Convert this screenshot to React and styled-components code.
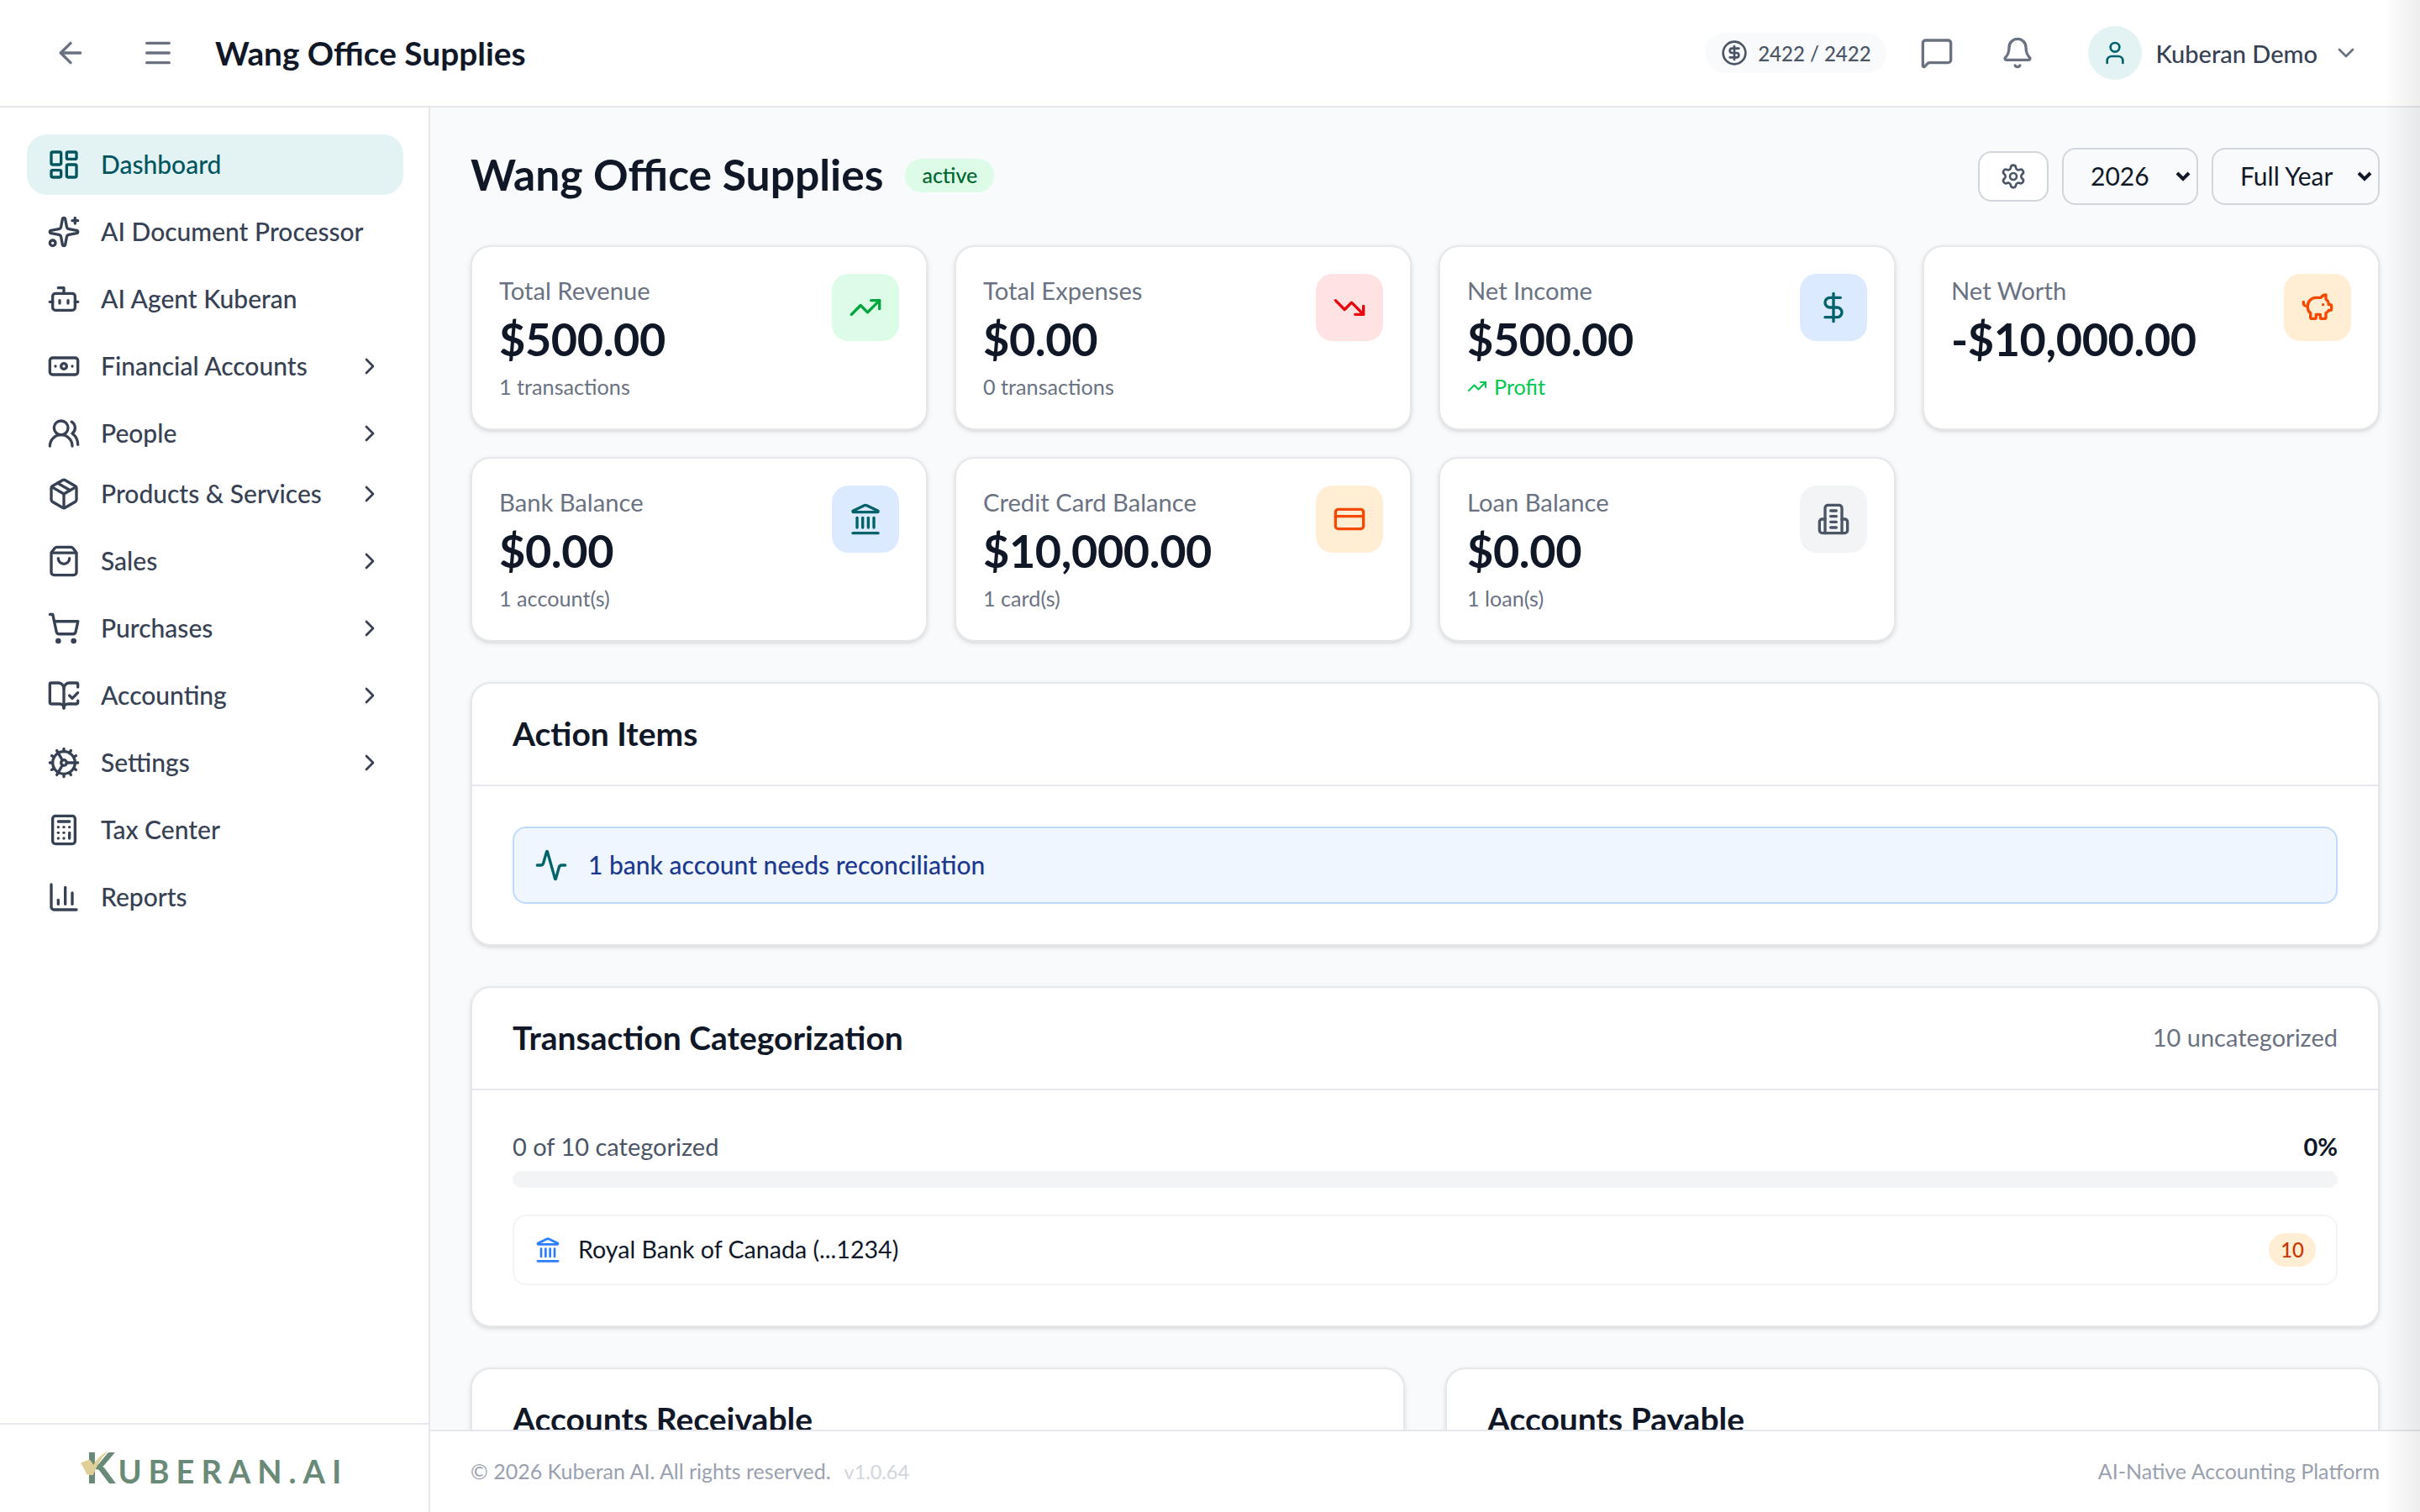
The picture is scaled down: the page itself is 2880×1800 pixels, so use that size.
import React from 'react'
import styled, { createGlobalStyle } from 'styled-components'
import {
  Activity, ArrowLeft, Banknote, Bell, BookOpenCheck, Bot, Calculator, ChartColumn,
  ChevronDown, ChevronRight, CircleDollarSign, Cog, CreditCard, DollarSign, Landmark, LayoutDashboard,
  Menu, MessageSquare, Package, PiggyBank, Settings, ShoppingBag, ShoppingCart, Sparkles, TrendingDown,
  TrendingUp, User, UsersRound,
} from 'lucide-react'

const GlobalStyle = createGlobalStyle`
  html, body { margin: 0; padding: 0; height: 100%; }
  body { font-family: Lato, "DejaVu Sans", sans-serif; color: #101828; background: #f9fafb; }
  #root { height: 100%; }
  * { box-sizing: border-box; }
`

const Page = styled.div`
  position: relative;
  height: 1800px;
  display: flex;
  flex-direction: column;
  overflow: hidden;
`

const EdgeFade = styled.div`
  position: absolute;
  top: 0;
  right: 0;
  bottom: 0;
  width: 44px;
  background: linear-gradient(to right, rgba(0, 0, 0, 0), rgba(0, 0, 0, 0.07));
  pointer-events: none;
`

const TopBar = styled.header`
  height: 128px;
  flex: none;
  display: flex;
  align-items: center;
  justify-content: space-between;
  padding: 0 48px;
  background: #fff;
  border-bottom: 2px solid #e5e7eb;
`

const BarGroup = styled.div`
  display: flex;
  align-items: center;
  gap: ${p => p.$gap || 24}px;
`

const IconButton = styled.div`
  width: 72px;
  height: 72px;
  display: flex;
  align-items: center;
  justify-content: center;
  color: #6a7282;
`

const CompanyName = styled.div`
  font-size: 38.8px;
  font-weight: 700;
  color: #101828;
`

const CreditPill = styled.div`
  width: 216px;
  height: 48px;
  display: flex;
  align-items: center;
  justify-content: center;
  gap: 12px;
  border-radius: 24px;
  background: #f9fafb;
  color: #4a5565;
  font-size: 24px;
  font-weight: 500;
`

const UserButton = styled.div`
  display: flex;
  align-items: center;
  gap: 16px;
  padding: 0 24px;
  color: #6a7282;
`

const Avatar = styled.div`
  width: 64px;
  height: 64px;
  border-radius: 50%;
  background: #e3f2f3;
  color: #00626b;
  display: flex;
  align-items: center;
  justify-content: center;
`

const UserName = styled.span`
  font-size: 29px;
  font-weight: 500;
  color: #364153;
  margin-right: 2px;
`

const Body = styled.div`
  flex: 1;
  min-height: 0;
  display: flex;
`

const Sidebar = styled.aside`
  width: 512px;
  flex: none;
  display: flex;
  flex-direction: column;
  background: #fff;
  border-right: 2px solid #e5e7eb;
`

const Nav = styled.nav`
  flex: 1;
  padding: 32px 30px 0 32px;
`

const NavItem = styled.div`
  height: 72px;
  margin-bottom: ${p => (p.$tight ? 0 : 8)}px;
  display: flex;
  align-items: center;
  gap: 24px;
  padding: 0 24px;
  border-radius: 24px;
  background: ${p => (p.$active ? '#e3f2f3' : 'transparent')};
  color: ${p => (p.$active ? '#00555e' : '#364153')};
  font-size: 30px;
  font-weight: 500;
`

const NavLabel = styled.span`
  flex: 1;
  padding-bottom: 3px;
`

const SideFoot = styled.div`
  height: 106px;
  flex: none;
  display: flex;
  align-items: center;
  justify-content: center;
  border-top: 2px solid #e5e7eb;
`

const Logo = styled.div`
  position: relative;
  display: flex;
  align-items: baseline;
  padding: 0 0 5px 6px;
  color: #6a8a78;
  font-size: 38px;
  font-weight: 700;
  letter-spacing: 8px;
  line-height: 1;
`

const LogoK = styled.span`
  font-size: 52px;
  letter-spacing: 3px;
`

const LogoCheck = styled.svg`
  position: absolute;
  left: 0;
  top: 6px;
`

const MainColumn = styled.div`
  flex: 1;
  min-width: 0;
  display: flex;
  flex-direction: column;
`

const Content = styled.main`
  flex: 1;
  min-height: 0;
  overflow: hidden;
  padding: 48px 48px 0;
  background: #f9fafb;
`

const TitleRow = styled.div`
  height: 68px;
  display: flex;
  align-items: center;
  justify-content: space-between;
  margin-bottom: 48px;
`

const TitleGroup = styled.div`
  display: flex;
  align-items: center;
  gap: 26px;
`

const PageTitle = styled.h1`
  margin: 0 0 6px;
  font-size: 51.6px;
  font-weight: 700;
  color: #101828;
`

const StatusBadge = styled.span`
  height: 40px;
  padding: 0 20px 2px;
  margin-bottom: 2px;
  display: flex;
  align-items: center;
  border-radius: 20px;
  background: #dcfce7;
  color: #016630;
  font-size: 25px;
  font-weight: 500;
`

const Filters = styled.div`
  display: flex;
  align-items: center;
  gap: 16px;
`

const GearButton = styled.div`
  width: 84px;
  height: 60px;
  display: flex;
  align-items: center;
  justify-content: center;
  border: 2px solid #d1d5dc;
  border-radius: 16px;
  background: #fff;
  color: #4a5565;
`

const SelectWrap = styled.div`
  position: relative;
  display: flex;
`

const PeriodSelect = styled.select`
  appearance: none;
  width: ${p => p.$width}px;
  height: 68px;
  padding: 0 0 3px 32px;
  border: 2px solid #d1d5dc;
  border-radius: 16px;
  background: transparent;
  color: #101828;
  font-family: inherit;
  font-size: 30px;
`

const SelectArrow = styled.svg`
  position: absolute;
  right: 9px;
  top: 28px;
  pointer-events: none;
`

const StatGrid = styled.div`
  display: grid;
  grid-template-columns: repeat(4, 1fr);
  gap: 32px;
  margin-bottom: 48px;
`

const StatCard = styled.div`
  height: 220px;
  display: flex;
  justify-content: space-between;
  align-items: flex-start;
  padding: 32px;
  background: #fff;
  border: 2px solid #e5e7eb;
  border-radius: 24px;
  box-shadow: 0 2px 6px rgba(0, 0, 0, 0.1), 0 2px 4px -2px rgba(0, 0, 0, 0.1);
`

const StatLabel = styled.div`
  font-size: 29.2px;
  line-height: 40px;
  color: #6a7282;
`

const StatValue = styled.div`
  margin-top: 6px;
  font-size: 54px;
  line-height: 64px;
  font-weight: 700;
  letter-spacing: -0.4px;
  color: #101828;
`

const StatNote = styled.div`
  margin-top: 8px;
  display: flex;
  align-items: center;
  gap: 8px;
  font-size: 25.2px;
  line-height: 32px;
  color: ${p => p.$color || '#6a7282'};
`

const IconTile = styled.div`
  width: 80px;
  height: 80px;
  flex: none;
  display: flex;
  align-items: center;
  justify-content: center;
  border-radius: 20px;
  background: ${p => p.$bg};
  color: ${p => p.$color};
`

const Panel = styled.section`
  margin-bottom: 48px;
  background: #fff;
  border: 2px solid #e5e7eb;
  border-radius: 24px;
  box-shadow: 0 2px 6px rgba(0, 0, 0, 0.1), 0 2px 4px -2px rgba(0, 0, 0, 0.1);
`

const PanelHead = styled.div`
  height: 122px;
  display: flex;
  align-items: center;
  justify-content: space-between;
  padding: 0 48px;
  border-bottom: 2px solid #e5e7eb;
`

const PanelTitle = styled.h2`
  margin: 0 0 3px;
  font-size: 39px;
  font-weight: 700;
  color: #101828;
`

const PanelAside = styled.span`
  font-size: 29px;
  color: #6a7282;
  padding-bottom: 3px;
`

const PanelBody = styled.div`
  padding: 48px;
`

const ActionAlert = styled.div`
  height: 92px;
  display: flex;
  align-items: center;
  gap: 24px;
  padding: 0 24px;
  background: #eff6ff;
  border: 2px solid #bedbff;
  border-radius: 16px;
  color: #1c398e;
  font-size: 30px;
  font-weight: 500;
`

const AlertText = styled.span`
  padding-bottom: 3px;
`

const ProgressHead = styled.div`
  height: 40px;
  display: flex;
  align-items: center;
  justify-content: space-between;
  margin-bottom: 8px;
  padding-bottom: 3px;
  font-size: 29px;
  color: #4a5565;
`

const ProgressValue = styled.span`
  font-weight: 700;
  color: #101828;
`

const ProgressTrack = styled.div`
  height: 20px;
  margin-bottom: 32px;
  border-radius: 10px;
  background: #f3f4f6;
`

const BankRow = styled.div`
  height: 84px;
  display: flex;
  align-items: center;
  gap: 20px;
  padding: 0 24px;
  border: 2px solid #f3f4f6;
  border-radius: 16px;
  color: #101828;
  font-size: 28.6px;
`

const BankName = styled.span`
  flex: 1;
  padding-bottom: 2px;
`

const CountBadge = styled.span`
  height: 40px;
  padding: 0 14px 2px;
  display: flex;
  align-items: center;
  border-radius: 20px;
  background: #ffedd4;
  color: #ca3500;
  font-size: 24px;
  font-weight: 500;
`

const HalfGrid = styled.div`
  display: grid;
  grid-template-columns: 1fr 1fr;
  gap: 48px;
`

const FootBar = styled.footer`
  height: 98px;
  flex: none;
  display: flex;
  align-items: center;
  justify-content: space-between;
  padding: 0 48px 3px;
  background: #fff;
  border-top: 2px solid #e5e7eb;
  color: #99a1af;
  font-size: 25px;
`

const Version = styled.span`
  margin-left: 16px;
  font-size: 23.4px;
  color: #d1d5dc;
`

// tower with four windows, the lucide one has a door now
const LoanBuilding = ({ size }) => (
  <svg width={size} height={size} viewBox="0 0 24 24" fill="none" stroke="currentColor" strokeWidth="2" strokeLinecap="round" strokeLinejoin="round">
    <path d="M6 22V4a2 2 0 0 1 2-2h8a2 2 0 0 1 2 2v18Z" />
    <path d="M6 12H4a2 2 0 0 0-2 2v6a2 2 0 0 0 2 2h2" />
    <path d="M18 12h2a2 2 0 0 1 2 2v6a2 2 0 0 1-2 2h-2" />
    <path d="M10 6h4" />
    <path d="M10 10h4" />
    <path d="M10 14h4" />
    <path d="M10 18h4" />
  </svg>
)

const navItems = [
  { label: 'Dashboard', icon: LayoutDashboard, active: true },
  { label: 'AI Document Processor', icon: Sparkles },
  { label: 'AI Agent Kuberan', icon: Bot },
  { label: 'Financial Accounts', icon: Banknote, more: true },
  { label: 'People', icon: UsersRound, more: true, tight: true },
  { label: 'Products & Services', icon: Package, more: true },
  { label: 'Sales', icon: ShoppingBag, more: true },
  { label: 'Purchases', icon: ShoppingCart, more: true },
  { label: 'Accounting', icon: BookOpenCheck, more: true },
  { label: 'Settings', icon: Cog, more: true },
  { label: 'Tax Center', icon: Calculator },
  { label: 'Reports', icon: ChartColumn },
]

const stats = [
  { label: 'Total Revenue', value: '$500.00', note: '1 transactions', icon: TrendingUp, bg: '#dcfce7', color: '#00a63e' },
  { label: 'Total Expenses', value: '$0.00', note: '0 transactions', icon: TrendingDown, bg: '#ffe2e2', color: '#e7000b' },
  { label: 'Net Income', value: '$500.00', note: 'Profit', profit: true, icon: DollarSign, bg: '#dbeafe', color: '#00626b' },
  { label: 'Net Worth', value: '-$10,000.00', icon: PiggyBank, bg: '#ffedd4', color: '#f54900' },
  { label: 'Bank Balance', value: '$0.00', note: '1 account(s)', icon: Landmark, bg: '#dbeafe', color: '#00626b' },
  { label: 'Credit Card Balance', value: '$10,000.00', note: '1 card(s)', icon: CreditCard, bg: '#ffedd4', color: '#f54900' },
  { label: 'Loan Balance', value: '$0.00', note: '1 loan(s)', icon: LoanBuilding, bg: '#f3f4f6', color: '#4a5565' },
]

const Period = ({ width, value }) => (
  <SelectWrap>
    <PeriodSelect $width={width} defaultValue={value}><option>{value}</option></PeriodSelect>
    <SelectArrow width="18" height="12" viewBox="0 0 18 12">
      <polyline points="2,2 9,9 16,2" fill="none" stroke="#101828" strokeWidth="4" />
    </SelectArrow>
  </SelectWrap>
)

const App = () => {
  return (
    <Page>
      <GlobalStyle />
      <TopBar>
        <BarGroup $gap={32}>
          <IconButton><ArrowLeft size={40} /></IconButton>
          <IconButton><Menu size={40} /></IconButton>
          <CompanyName>Wang Office Supplies</CompanyName>
        </BarGroup>
        <BarGroup>
          <CreditPill><CircleDollarSign size={32} />2422 / 2422</CreditPill>
          <IconButton><MessageSquare size={40} /></IconButton>
          <IconButton><Bell size={40} /></IconButton>
          <UserButton>
            <Avatar><User size={32} /></Avatar>
            <UserName>Kuberan Demo</UserName>
            <ChevronDown size={32} />
          </UserButton>
        </BarGroup>
      </TopBar>
      <Body>
        <Sidebar>
          <Nav>
            {navItems.map(item => (
              <NavItem key={item.label} $active={item.active} $tight={item.tight}>
                <item.icon size={40} />
                <NavLabel>{item.label}</NavLabel>
                {item.more && <ChevronRight size={32} />}
              </NavItem>
            ))}
          </Nav>
          <SideFoot>
            <Logo>
              <LogoK>K</LogoK>UBERAN.AI
              <LogoCheck width="34" height="30" viewBox="0 0 34 30">
                <path fill="#e0cf97" d="M0 16C5 13 9 12 11 12C13 14 14 16 15 18C20 10 26 5 34 0C26 8 19 18 15 30C11 30 8 30 7 29C5 24 3 20 0 16Z" />
              </LogoCheck>
            </Logo>
          </SideFoot>
        </Sidebar>
        <MainColumn>
          <Content>
            <TitleRow>
              <TitleGroup>
                <PageTitle>Wang Office Supplies</PageTitle>
                <StatusBadge>active</StatusBadge>
              </TitleGroup>
              <Filters>
                <GearButton><Settings size={32} /></GearButton>
                <Period width={162} value="2026" />
                <Period width={200} value="Full Year" />
              </Filters>
            </TitleRow>
            <StatGrid>
              {stats.map(s => (
                <StatCard key={s.label}>
                  <div>
                    <StatLabel>{s.label}</StatLabel>
                    <StatValue>{s.value}</StatValue>
                    {s.note && (
                      <StatNote $color={s.profit ? '#00c950' : undefined}>
                        {s.profit && <TrendingUp size={24} />}
                        {s.note}
                      </StatNote>
                    )}
                  </div>
                  <IconTile $bg={s.bg} $color={s.color}><s.icon size={40} /></IconTile>
                </StatCard>
              ))}
            </StatGrid>
            <Panel>
              <PanelHead><PanelTitle>Action Items</PanelTitle></PanelHead>
              <PanelBody>
                <ActionAlert>
                  <Activity size={40} color="#00626b" />
                  <AlertText>1 bank account needs reconciliation</AlertText>
                </ActionAlert>
              </PanelBody>
            </Panel>
            <Panel>
              <PanelHead>
                <PanelTitle>Transaction Categorization</PanelTitle>
                <PanelAside>10 uncategorized</PanelAside>
              </PanelHead>
              <PanelBody>
                <ProgressHead>
                  <span>0 of 10 categorized</span>
                  <ProgressValue>0%</ProgressValue>
                </ProgressHead>
                <ProgressTrack />
                <BankRow>
                  <Landmark size={32} color="#2b7fff" />
                  <BankName>Royal Bank of Canada (...1234)</BankName>
                  <CountBadge>10</CountBadge>
                </BankRow>
              </PanelBody>
            </Panel>
            <HalfGrid>
              <Panel><PanelHead><PanelTitle>Accounts Receivable</PanelTitle></PanelHead></Panel>
              <Panel><PanelHead><PanelTitle>Accounts Payable</PanelTitle></PanelHead></Panel>
            </HalfGrid>
          </Content>
          <FootBar>
            <div>© 2026 Kuberan AI. All rights reserved.<Version>v1.0.64</Version></div>
            <div>AI-Native Accounting Platform</div>
          </FootBar>
        </MainColumn>
      </Body>
      <EdgeFade />
    </Page>
  )
}

export default App
